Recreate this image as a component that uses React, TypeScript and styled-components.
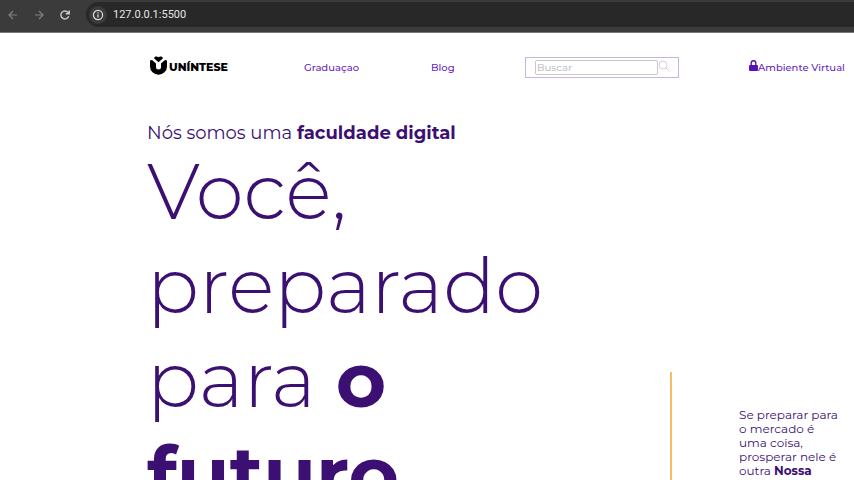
import React from "react";
import styled, { createGlobalStyle } from "styled-components";

const GlobalStyle = createGlobalStyle`
  * { box-sizing: border-box; }
  body {
    margin: 0;
    background: #fff;
    color: #3c1073;
    font-family: Montserrat, Inter, sans-serif;
  }
`;

const Page = styled.div`
  display: flex;
  flex-direction: column;
  height: 100vh;
  overflow: hidden;
`;

const BrowserBar = styled.div`
  flex: none;
  display: flex;
  align-items: center;
  height: 33px;
  padding: 0 0 3px 6px;
  background: #3b3b3b;
  border-bottom: 1px solid #777;
`;

const BarButton = styled.button`
  display: flex;
  width: 14px;
  height: 14px;
  margin-right: 12px;
  padding: 1px;
  border: 0;
  background: none;
  color: #c7c7c7;
  &:disabled { color: #808080; }
`;

const AddressBar = styled.div`
  flex: 1;
  display: flex;
  align-items: center;
  gap: 6px;
  height: 25px;
  margin-left: 2px;
  padding-left: 3px;
  border-radius: 13px 0 0 13px;
  background: #282828;
`;

const InfoButton = styled.button`
  display: flex;
  align-items: center;
  justify-content: center;
  width: 18px;
  height: 18px;
  padding: 0;
  border: 0;
  border-radius: 50%;
  background: #3b3b3b;
  color: #dcdcdc;
`;

const Address = styled.input`
  flex: 1;
  min-width: 0;
  padding: 0;
  border: 0;
  outline: 0;
  background: none;
  color: #e6e6e6;
  font: 11px Roboto, sans-serif;
`;

const Header = styled.header`
  flex: none;
  display: grid;
  grid-template-columns: 154fr 127fr 94fr 224fr 105fr;
  align-items: center;
  height: 68px;
  padding-left: 150px;
`;

const NavLink = styled.a`
  display: flex;
  align-items: center;
  padding-top: 2px;
  color: #6a1fc0;
  font-size: 10px;
  font-weight: 500;
  line-height: 14px;
  text-decoration: none;
  white-space: nowrap;
`;

const LockIcon = styled.svg`
  margin-bottom: 4px;
`;

const Brand = styled.a`
  display: flex;
  align-items: center;
  gap: 2px;
  color: #000;
  font-size: 11px;
  font-weight: 800;
  line-height: 14px;
  text-decoration: none;
`;

const BrandMark = styled.svg`
  margin-bottom: 3px;
`;

const Search = styled.form`
  display: flex;
  align-items: center;
  width: 154px;
  height: 21px;
  padding-left: 9px;
  border: 1px solid #c9b2e5;
`;

const SearchInput = styled.input`
  width: 123px;
  height: 15px;
  padding: 0 1px;
  border: 1px solid #c9c9c9;
  border-radius: 2px;
  font: 500 10px Montserrat, Inter, sans-serif;
  &::placeholder { color: #c4c4c4; opacity: 1; }
`;

const SearchButton = styled.button`
  display: flex;
  padding: 0;
  border: 0;
  background: none;
  color: #dccbef;
`;

const Hero = styled.main`
  flex: 1;
  min-height: 0;
  display: grid;
  grid-template-columns: 523fr 184fr;
  padding-left: 147px;
`;

const Intro = styled.p`
  margin: 22px 0 0;
  font-size: 18px;
  line-height: 21px;
  font-weight: 400;
  white-space: nowrap;
  b { font-weight: 700; }
`;

const Title = styled.h1`
  max-width: 420px;
  margin: 0;
  font-size: 77px;
  line-height: 94px;
  font-weight: 300;
  b { font-weight: 700; }
`;

const Aside = styled.aside`
  margin-top: 271px;
  padding: 36px 12px 0 67px;
  border-left: 2px solid #f8bd62;
`;

const AsideText = styled.p`
  margin: 0;
  font-size: 12px;
  line-height: 14px;
  b { font-weight: 700; }
`;

const Arrow = ({ back = false }: { back?: boolean }) => (
  <svg width="12" height="12" viewBox="0 0 12 12" fill="none" stroke="currentColor" strokeWidth="1.2">
    <path d={back ? "M10 6H2M6 2L2 6l4 4" : "M2 6h8M6 2l4 4-4 4"} />
  </svg>
);

export default function App() {
  return (
    <>
      <GlobalStyle />
      <Page>
        <BrowserBar>
          <BarButton aria-label="Voltar" disabled><Arrow back /></BarButton>
          <BarButton aria-label="Avançar" disabled><Arrow /></BarButton>
          <BarButton aria-label="Recarregar">
            <svg width="12" height="12" viewBox="0 0 12 12" fill="none" stroke="currentColor" strokeWidth="1.5">
              <path d="M9.7 7.2A4 4 0 1 1 9 3.4L10 4.6M10.2 1.4v3.4H6.8" />
            </svg>
          </BarButton>
          <AddressBar>
            <InfoButton aria-label="Informações do site">
              <svg width="12" height="12" viewBox="0 0 12 12" fill="none" stroke="currentColor" strokeWidth="1.2">
                <circle cx="6" cy="6" r="4.6" />
                <path d="M6 5.2v3.2M6 3.2v1.2" />
              </svg>
            </InfoButton>
            <Address aria-label="Endereço" defaultValue="127.0.0.1:5500" />
          </AddressBar>
        </BrowserBar>
        <Header>
          <Brand href="#">
            <BrandMark width="17" height="19" viewBox="0 0 17 19" fill="currentColor">
              <path d="M0 4.500L2 4l4 3.500V11a2.500 2.500 0 0 0 5 0V7.500L15 4l2 .5V10.500a8.200 8 0 0 1-17 0z" />
              <path d="M8.5 6.200L4.200 2.600C3.900.3 6.800-.3 8.500 1.200c1.700-1.500 4.600-.9 4.300 1.400z" />
            </BrandMark>
            UNÍNTESE
          </Brand>
          <NavLink href="#">Graduaçao</NavLink>
          <NavLink href="#">Blog</NavLink>
          <Search>
            <SearchInput type="text" aria-label="Buscar" placeholder="Buscar" />
            <SearchButton type="button" aria-label="Pesquisar">
              <svg width="12" height="14" viewBox="0 0 12 14" fill="none" stroke="currentColor">
                <circle cx="5" cy="5" r="4" />
                <path d="M8 8l3.4 3.4" />
              </svg>
            </SearchButton>
          </Search>
          <NavLink href="#">
            <LockIcon width="9" height="14" viewBox="0 0 9 14">
              <path d="M2.2 6V4a2.3 2.3 0 0 1 4.6 0v2" fill="none" stroke="#5a12b4" strokeWidth="1.4" />
              <rect y="6" width="9" height="6" rx="1" fill="#5a12b4" />
            </LockIcon>
            Ambiente Virtual
          </NavLink>
        </Header>
        <Hero>
          <section>
            <Intro>Nós somos uma <b>faculdade digital</b></Intro>
            <Title>Você, preparado para <b>o futuro</b></Title>
          </section>
          <Aside>
            <AsideText>Se preparar para o mercado é uma coisa, prosperar nele é outra <b>Nossa</b> metodologia</AsideText>
          </Aside>
        </Hero>
      </Page>
    </>
  );
}
